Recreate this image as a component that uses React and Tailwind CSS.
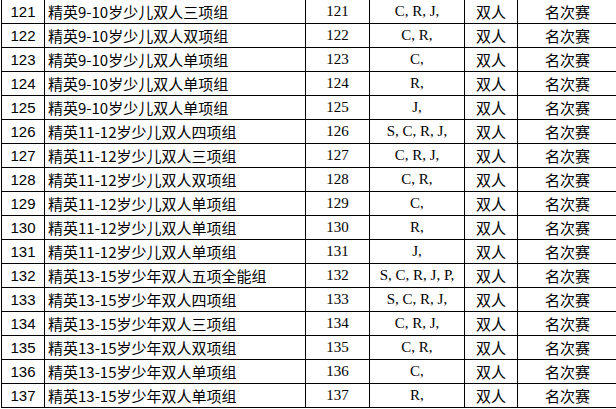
import React from 'react';

const rows = [
  [121, '精英9-10岁少儿双人三项组', 'C, R, J,'],
  [122, '精英9-10岁少儿双人双项组', 'C, R,'],
  [123, '精英9-10岁少儿双人单项组', 'C,'],
  [124, '精英9-10岁少儿双人单项组', 'R,'],
  [125, '精英9-10岁少儿双人单项组', 'J,'],
  [126, '精英11-12岁少儿双人四项组', 'S, C, R, J,'],
  [127, '精英11-12岁少儿双人三项组', 'C, R, J,'],
  [128, '精英11-12岁少儿双人双项组', 'C, R,'],
  [129, '精英11-12岁少儿双人单项组', 'C,'],
  [130, '精英11-12岁少儿双人单项组', 'R,'],
  [131, '精英11-12岁少儿双人单项组', 'J,'],
  [132, '精英13-15岁少年双人五项全能组', 'S, C, R, J, P,'],
  [133, '精英13-15岁少年双人四项组', 'S, C, R, J,'],
  [134, '精英13-15岁少年双人三项组', 'C, R, J,'],
  [135, '精英13-15岁少年双人双项组', 'C, R,'],
  [136, '精英13-15岁少年双人单项组', 'C,'],
  [137, '精英13-15岁少年双人单项组', 'R,'],
];

// every cell carries its own right + bottom rule, the wrapper adds left + top
const cell = 'h-[23px] box-content border-r border-b border-black flex items-center';

const App = () => {
  return (
    <div className="w-[616px] h-[409px] overflow-hidden bg-white text-black">
      <div className="ml-px -mt-px w-fit border-l border-t border-black text-[15px] leading-none">
        {rows.map(([num, name, items]) => (
          <div key={num} className="flex">
            <div className={`${cell} w-[42px] justify-center font-['Liberation_Sans',sans-serif]`}>{num}</div>
            <div className={`${cell} w-[257px] pl-[3px] font-['Noto_Sans_CJK_SC',sans-serif]`}>{name}</div>
            <div className={`${cell} w-[63px] justify-center font-['Liberation_Serif',serif]`}>{num}</div>
            <div className={`${cell} w-[94px] justify-center font-['Liberation_Serif',serif]`}>{items}</div>
            <div className={`${cell} w-[52px] justify-center font-['Noto_Sans_CJK_SC',sans-serif]`}>双人</div>
            <div className={`${cell} w-[99px] justify-center font-['Noto_Sans_CJK_SC',sans-serif]`}>名次赛</div>
          </div>
        ))}
      </div>
    </div>
  );
};

export default App;
